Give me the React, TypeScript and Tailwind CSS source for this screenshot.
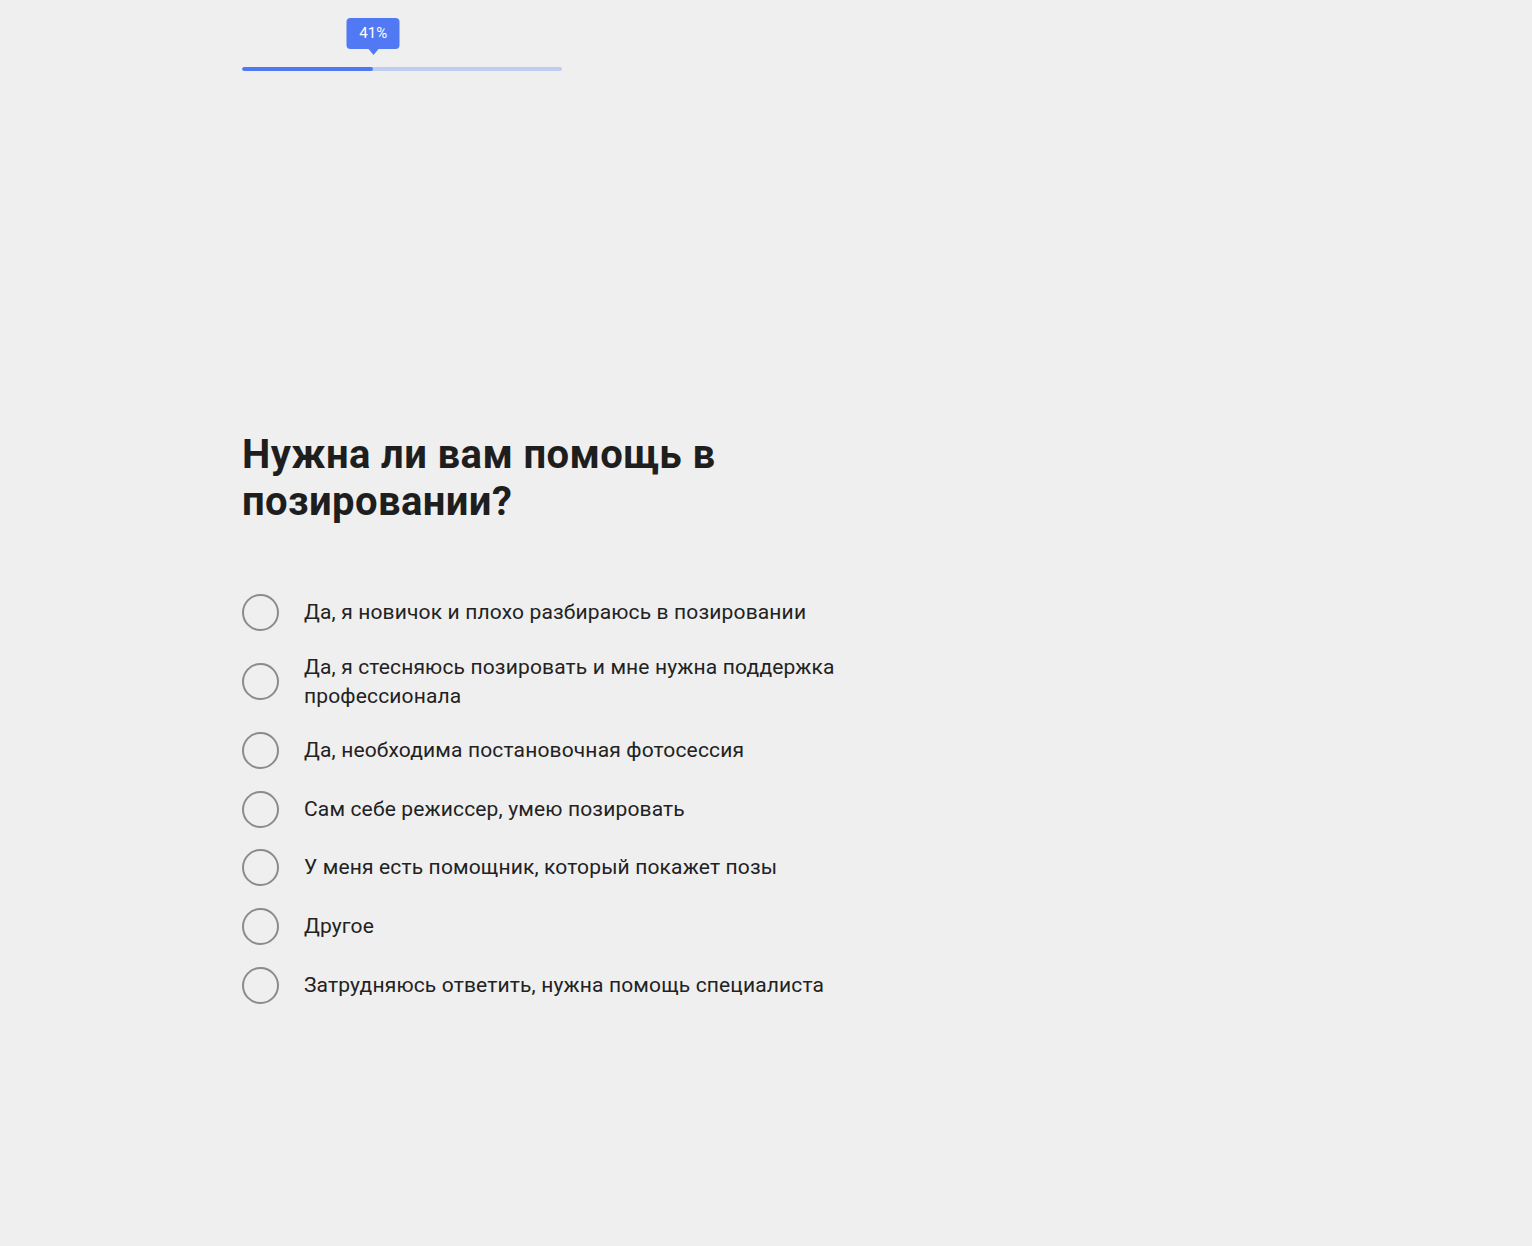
import React, { useState } from 'react';

const OPTIONS = [
  'Да, я новичок и плохо разбираюсь в позировании',
  'Да, я стесняюсь позировать и мне нужна поддержка профессионала',
  'Да, необходима постановочная фотосессия',
  'Сам себе режиссер, умею позировать',
  'У меня есть помощник, который покажет позы',
  'Другое',
  'Затрудняюсь ответить, нужна помощь специалиста',
];

const PROGRESS = 41;

export default function App() {
  const [selected, setSelected] = useState<number | null>(null);

  return (
    <div className="min-h-[1246px] bg-[#efefef] pl-[242px] pt-[18px] font-['Roboto','Liberation_Sans',sans-serif]">
      {/* Progress */}
      <div className="relative w-[320px] h-[53px]">
        <div
          className="absolute top-0 -translate-x-1/2 flex flex-col items-center"
          style={{ left: `${PROGRESS}%` }}
        >
          <div className="h-[31px] w-[53px] rounded-[4px] bg-[#5079f3] flex items-center justify-center text-[15px] text-white leading-none">
            {PROGRESS}%
          </div>
          <div className="w-0 h-0 border-l-[5px] border-r-[5px] border-t-[6px] border-l-transparent border-r-transparent border-t-[#5079f3]" />
        </div>
        <div className="absolute bottom-0 left-0 w-full h-[4px] rounded-full bg-[#c0cdf1] overflow-hidden">
          <div className="h-full bg-[#4f79f2] rounded-full" style={{ width: `${PROGRESS}%` }} />
        </div>
      </div>

      {/* Question */}
      <div className="w-[600px] mt-[360px]">
        <h1 className="text-[40px] leading-[47px] font-bold tracking-[0.4px] text-[#1e1e1e]">
          Нужна ли вам помощь в позировании?
        </h1>

        <div className="mt-[69px] flex flex-col gap-[21.6px]">
          {OPTIONS.map((label, i) => (
            <button
              key={i}
              type="button"
              onClick={() => setSelected(i)}
              className="flex items-center gap-[25px] text-left cursor-pointer"
            >
              <span className="shrink-0 w-[37px] h-[37px] rounded-full border-2 border-[#8b8b8b] flex items-center justify-center">
                {selected === i && <span className="w-[17px] h-[17px] rounded-full bg-[#4f79f2]" />}
              </span>
              <span className="text-[21px] leading-[29px] tracking-[0.15px] text-[#222222]">{label}</span>
            </button>
          ))}
        </div>
      </div>
    </div>
  );
}
